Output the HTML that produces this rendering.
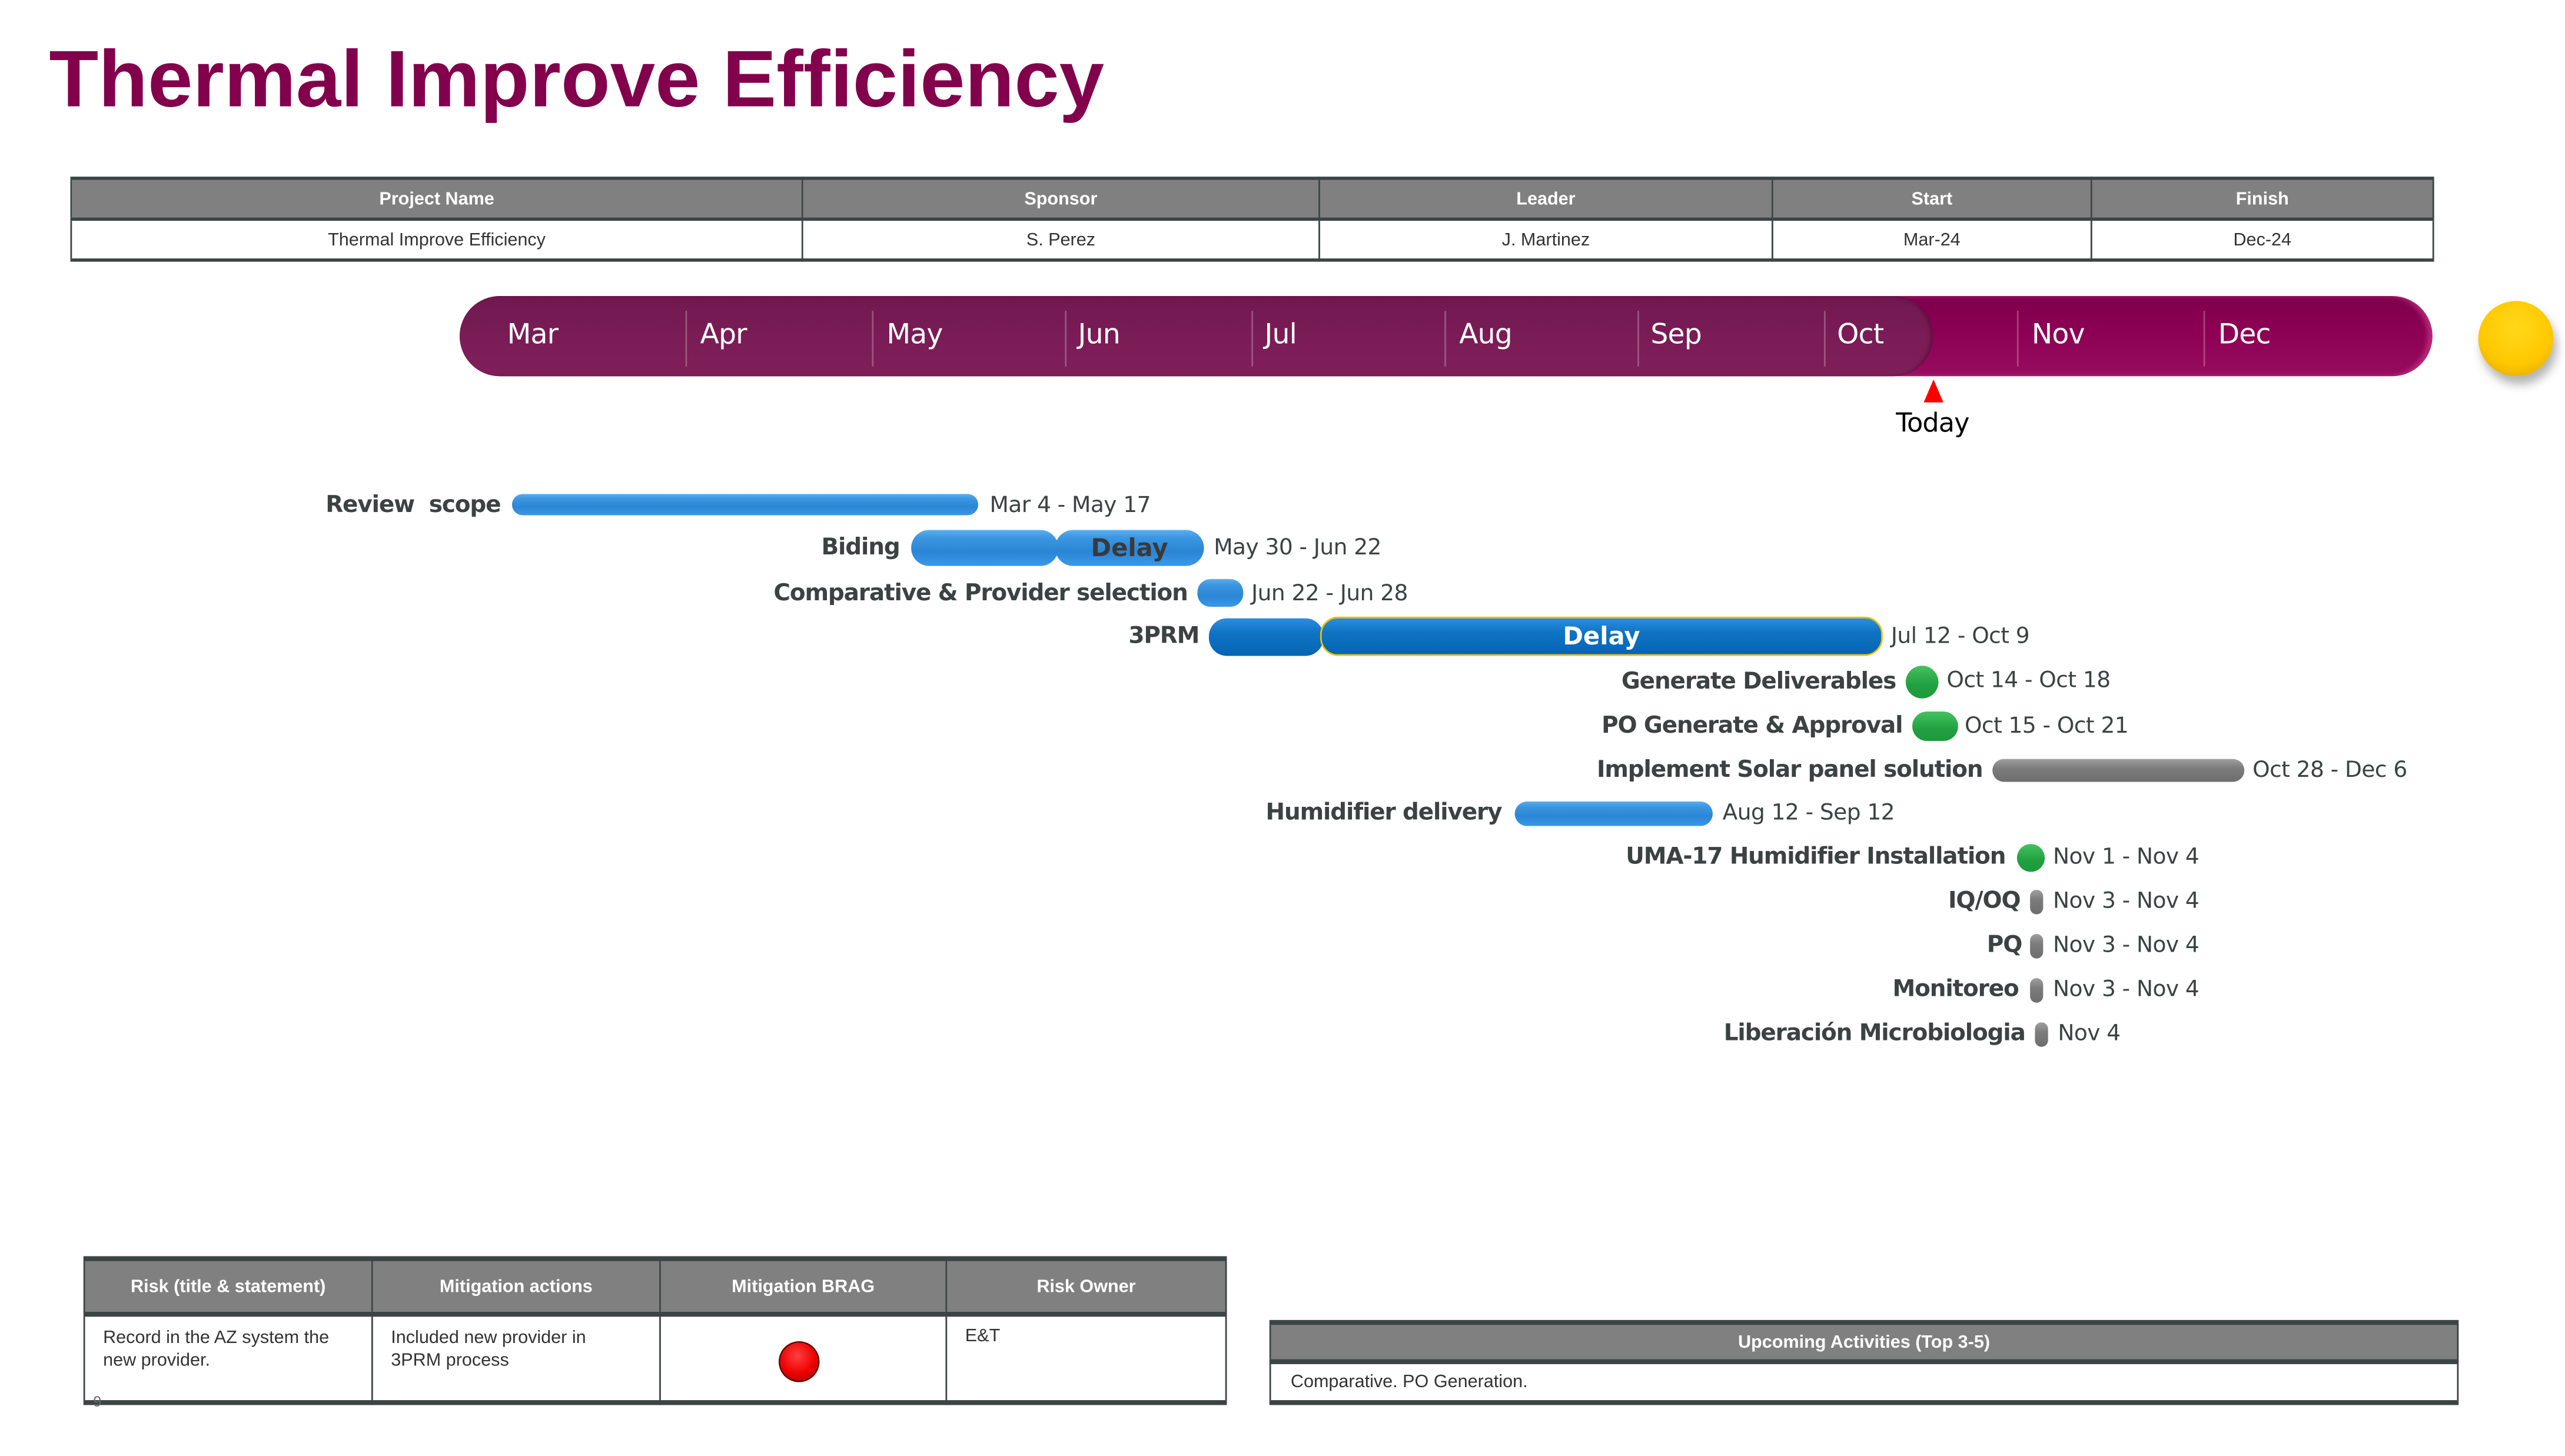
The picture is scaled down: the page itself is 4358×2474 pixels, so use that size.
<!DOCTYPE html>
<html><head><meta charset="utf-8">
<style>
html,body{margin:0;padding:0;background:#fff;}
body{width:4358px;height:2473px;overflow:hidden;position:relative;}
#c{position:absolute;left:0;top:0;width:1568px;height:890px;transform:scale(2.7793);transform-origin:0 0;font-family:"Liberation Sans","DejaVu Sans",sans-serif;}
.a{position:absolute;white-space:nowrap;}
table{border-collapse:collapse;position:absolute;font-family:"Liberation Sans",sans-serif;table-layout:fixed;}
td,th{border:1px solid #3d4444;padding:0;}
th{background:#808080;color:#fff;font-size:11px;font-weight:bold;}
td{font-size:11px;color:#333;}
.lbl{position:absolute;white-space:nowrap;font-family:"DejaVu Sans","Liberation Sans",sans-serif;font-weight:bold;font-size:14px;color:#3c4242;text-align:right;line-height:20px;letter-spacing:-0.4px;}
.dt{position:absolute;white-space:nowrap;font-family:"DejaVu Sans","Liberation Sans",sans-serif;font-size:13.5px;color:#3c4242;line-height:20px;letter-spacing:-0.2px;}
.bl{position:absolute;border-radius:8px;background:linear-gradient(#5ab0f0 0%,#3d97e2 20%,#2a86d4 60%,#3a98e6 100%);}
.db{position:absolute;border-radius:9px;background:linear-gradient(#2b8ee0 0%,#0f73c4 40%,#0565b3 100%);}
.gr{position:absolute;border-radius:10px;background:linear-gradient(#45c260,#20a040 60%,#1e9a3c);}
.gy{position:absolute;border-radius:7px;background:linear-gradient(#a0a0a0,#7c7c7c 40%,#6e6e6e);}
.m{position:absolute;top:195px;color:#fff;font-size:17px;font-family:"DejaVu Sans","Liberation Sans",sans-serif;letter-spacing:-0.3px;}
.sep{position:absolute;top:190px;width:1px;height:34px;background:rgba(255,255,255,0.25);}
</style></head><body><div id="c">
<svg class="a" style="left:0;top:0" width="720" height="90"><text x="30" y="65" textLength="645" lengthAdjust="spacingAndGlyphs" font-family="Liberation Sans, sans-serif" font-weight="bold" font-size="49" fill="#82004C">Thermal Improve Efficiency</text></svg>

<table style="left:43px;top:108px;width:1445px;height:52px;border-top:2px solid #3d4444;border-bottom:2px solid #3d4444;">
<tr style="height:25px"><th style="width:446px">Project Name</th><th style="width:315px">Sponsor</th><th style="width:276px">Leader</th><th style="width:194px">Start</th><th>Finish</th></tr>
<tr style="border-top:2px solid #3d4444"><td style="text-align:center">Thermal Improve Efficiency</td><td style="text-align:center">S. Perez</td><td style="text-align:center">J. Martinez</td><td style="text-align:center">Mar-24</td><td style="text-align:center">Dec-24</td></tr>
</table>

<div class="a" style="left:281px;top:181px;width:1206px;height:49px;border-radius:25px/25px;background:linear-gradient(#7e004a,#8c0054 40%,#970c5e);box-shadow:inset -3px 0 3px rgba(220,80,160,0.5);"></div>
<div class="a" style="left:281px;top:181px;width:901px;height:49px;border-radius:25px;background:linear-gradient(#711850,#7a1c56 50%,#7f1f5a);box-shadow:inset -2px 0 2px rgba(90,0,50,0.5);"></div>
<div class="sep" style="left:419px"></div><div class="sep" style="left:533px"></div><div class="sep" style="left:651px"></div><div class="sep" style="left:765px"></div><div class="sep" style="left:883px"></div><div class="sep" style="left:1001px"></div><div class="sep" style="left:1115px"></div><div class="sep" style="left:1233px"></div><div class="sep" style="left:1347px"></div>
<div class="m" style="left:310px">Mar</div><div class="m" style="left:428px">Apr</div><div class="m" style="left:542px">May</div><div class="m" style="left:659px">Jun</div><div class="m" style="left:773px">Jul</div><div class="m" style="left:892px">Aug</div><div class="m" style="left:1009px">Sep</div><div class="m" style="left:1123px">Oct</div><div class="m" style="left:1242px">Nov</div><div class="m" style="left:1356px">Dec</div>
<div class="a" style="left:1515px;top:184px;width:46px;height:46px;border-radius:50%;background:radial-gradient(circle at 50% 35%,#ffd81a,#ffc800 60%,#d9a000);box-shadow:2px 5px 6px rgba(0,0,0,0.3);"></div>
<svg class="a" style="left:1174px;top:232px" width="16" height="15"><polygon points="8,0 14,14 2,14" fill="#ff0000"/></svg>
<div class="a" style="left:1159px;top:249px;font-size:16px;color:#000;font-family:'DejaVu Sans',sans-serif;letter-spacing:-0.3px">Today</div>

<div class="lbl" style="right:1262px;top:299px">Review&nbsp; scope</div>
<div class="bl" style="left:313px;top:302px;width:285px;height:13px"></div>
<div class="dt" style="left:605px;top:299px">Mar 4 - May 17</div>

<div class="lbl" style="right:1018px;top:325px">Biding</div>
<div class="bl" style="left:557px;top:324px;width:90px;height:22px;border-radius:11px"></div>
<div class="bl" style="left:645px;top:324px;width:91px;height:22px;border-radius:11px;text-align:center;font-family:'DejaVu Sans',sans-serif;font-weight:bold;color:#3a3a3a;font-size:15px;line-height:22px">Delay</div>
<div class="dt" style="left:742px;top:325px">May 30 - Jun 22</div>

<div class="lbl" style="right:842px;top:353px">Comparative &amp; Provider selection</div>
<div class="bl" style="left:732px;top:354px;width:28px;height:17px"></div>
<div class="dt" style="left:765px;top:353px">Jun 22 - Jun 28</div>

<div class="lbl" style="right:835px;top:379px">3PRM</div>
<div class="db" style="left:739px;top:378px;width:70px;height:23px;border-radius:11px"></div>
<div class="db" style="left:807px;top:377px;width:342px;height:22px;border-radius:11px;border:1.5px solid #f0c000;text-align:center;color:#fff;font-family:'DejaVu Sans',sans-serif;font-weight:bold;font-size:15px;line-height:22px">Delay</div>
<div class="dt" style="left:1156px;top:379px">Jul 12 - Oct 9</div>

<div class="lbl" style="right:409px;top:407px">Generate Deliverables</div>
<div class="gr" style="left:1165px;top:407px;width:20px;height:20px"></div>
<div class="dt" style="left:1190px;top:406px">Oct 14 - Oct 18</div>

<div class="lbl" style="right:405px;top:434px">PO Generate &amp; Approval</div>
<div class="gr" style="left:1169px;top:435px;width:28px;height:18px"></div>
<div class="dt" style="left:1201px;top:434px">Oct 15 - Oct 21</div>

<div class="lbl" style="right:356px;top:461px">Implement Solar panel solution</div>
<div class="gy" style="left:1218px;top:464px;width:154px;height:14px"></div>
<div class="dt" style="left:1377px;top:461px">Oct 28 - Dec 6</div>

<div class="lbl" style="right:650px;top:487px">Humidifier delivery</div>
<div class="bl" style="left:926px;top:490px;width:121px;height:15px"></div>
<div class="dt" style="left:1053px;top:487px">Aug 12 - Sep 12</div>

<div class="lbl" style="right:342px;top:514px">UMA-17 Humidifier Installation</div>
<div class="gr" style="left:1233px;top:516px;width:17px;height:17px"></div>
<div class="dt" style="left:1255px;top:514px">Nov 1 - Nov 4</div>

<div class="lbl" style="right:333px;top:541px">IQ/OQ</div>
<div class="gy" style="left:1241px;top:544px;width:8px;height:15px;border-radius:4px"></div>
<div class="dt" style="left:1255px;top:541px">Nov 3 - Nov 4</div>

<div class="lbl" style="right:332px;top:568px">PQ</div>
<div class="gy" style="left:1241px;top:571px;width:8px;height:15px;border-radius:4px"></div>
<div class="dt" style="left:1255px;top:568px">Nov 3 - Nov 4</div>

<div class="lbl" style="right:334px;top:595px">Monitoreo</div>
<div class="gy" style="left:1241px;top:598px;width:8px;height:15px;border-radius:4px"></div>
<div class="dt" style="left:1255px;top:595px">Nov 3 - Nov 4</div>

<div class="lbl" style="right:330px;top:622px">Liberación Microbiologia</div>
<div class="gy" style="left:1244px;top:625px;width:8px;height:15px;border-radius:4px"></div>
<div class="dt" style="left:1258px;top:622px">Nov 4</div>

<table style="left:51px;top:768px;width:699px;height:91px;border-top:3px solid #3d4444;border-bottom:3px solid #3d4444;">
<tr style="height:34px"><th style="width:175px">Risk (title &amp; statement)</th><th style="width:175px">Mitigation actions</th><th style="width:174px">Mitigation BRAG</th><th>Risk Owner</th></tr>
<tr style="border-top:3px solid #3d4444"><td style="vertical-align:top;padding:6px 14px 0 11px;line-height:14px">Record in the AZ system the new provider.</td><td style="vertical-align:top;padding:6px 22px 0 11px;line-height:14px">Included new provider in 3PRM process</td><td></td><td style="vertical-align:top;padding:6px 0 0 11px">E&amp;T</td></tr>
</table>
<div class="a" style="left:477px;top:821px;width:23px;height:23px;border-radius:50%;background:radial-gradient(circle at 45% 35%,#ff4040,#ee0000 55%,#a00000);box-shadow:0 0 0 1px #600;"></div>
<div class="a" style="left:57px;top:852px;font-size:9px;color:#666">9</div>

<table style="left:776px;top:807px;width:727px;height:52px;border-top:3px solid #3d4444;border-bottom:3px solid #3d4444;">
<tr style="height:24px"><th>Upcoming Activities (Top 3-5)</th></tr>
<tr style="border-top:3px solid #3d4444"><td style="padding-left:12px">Comparative. PO Generation.</td></tr>
</table>
</div></body></html>
